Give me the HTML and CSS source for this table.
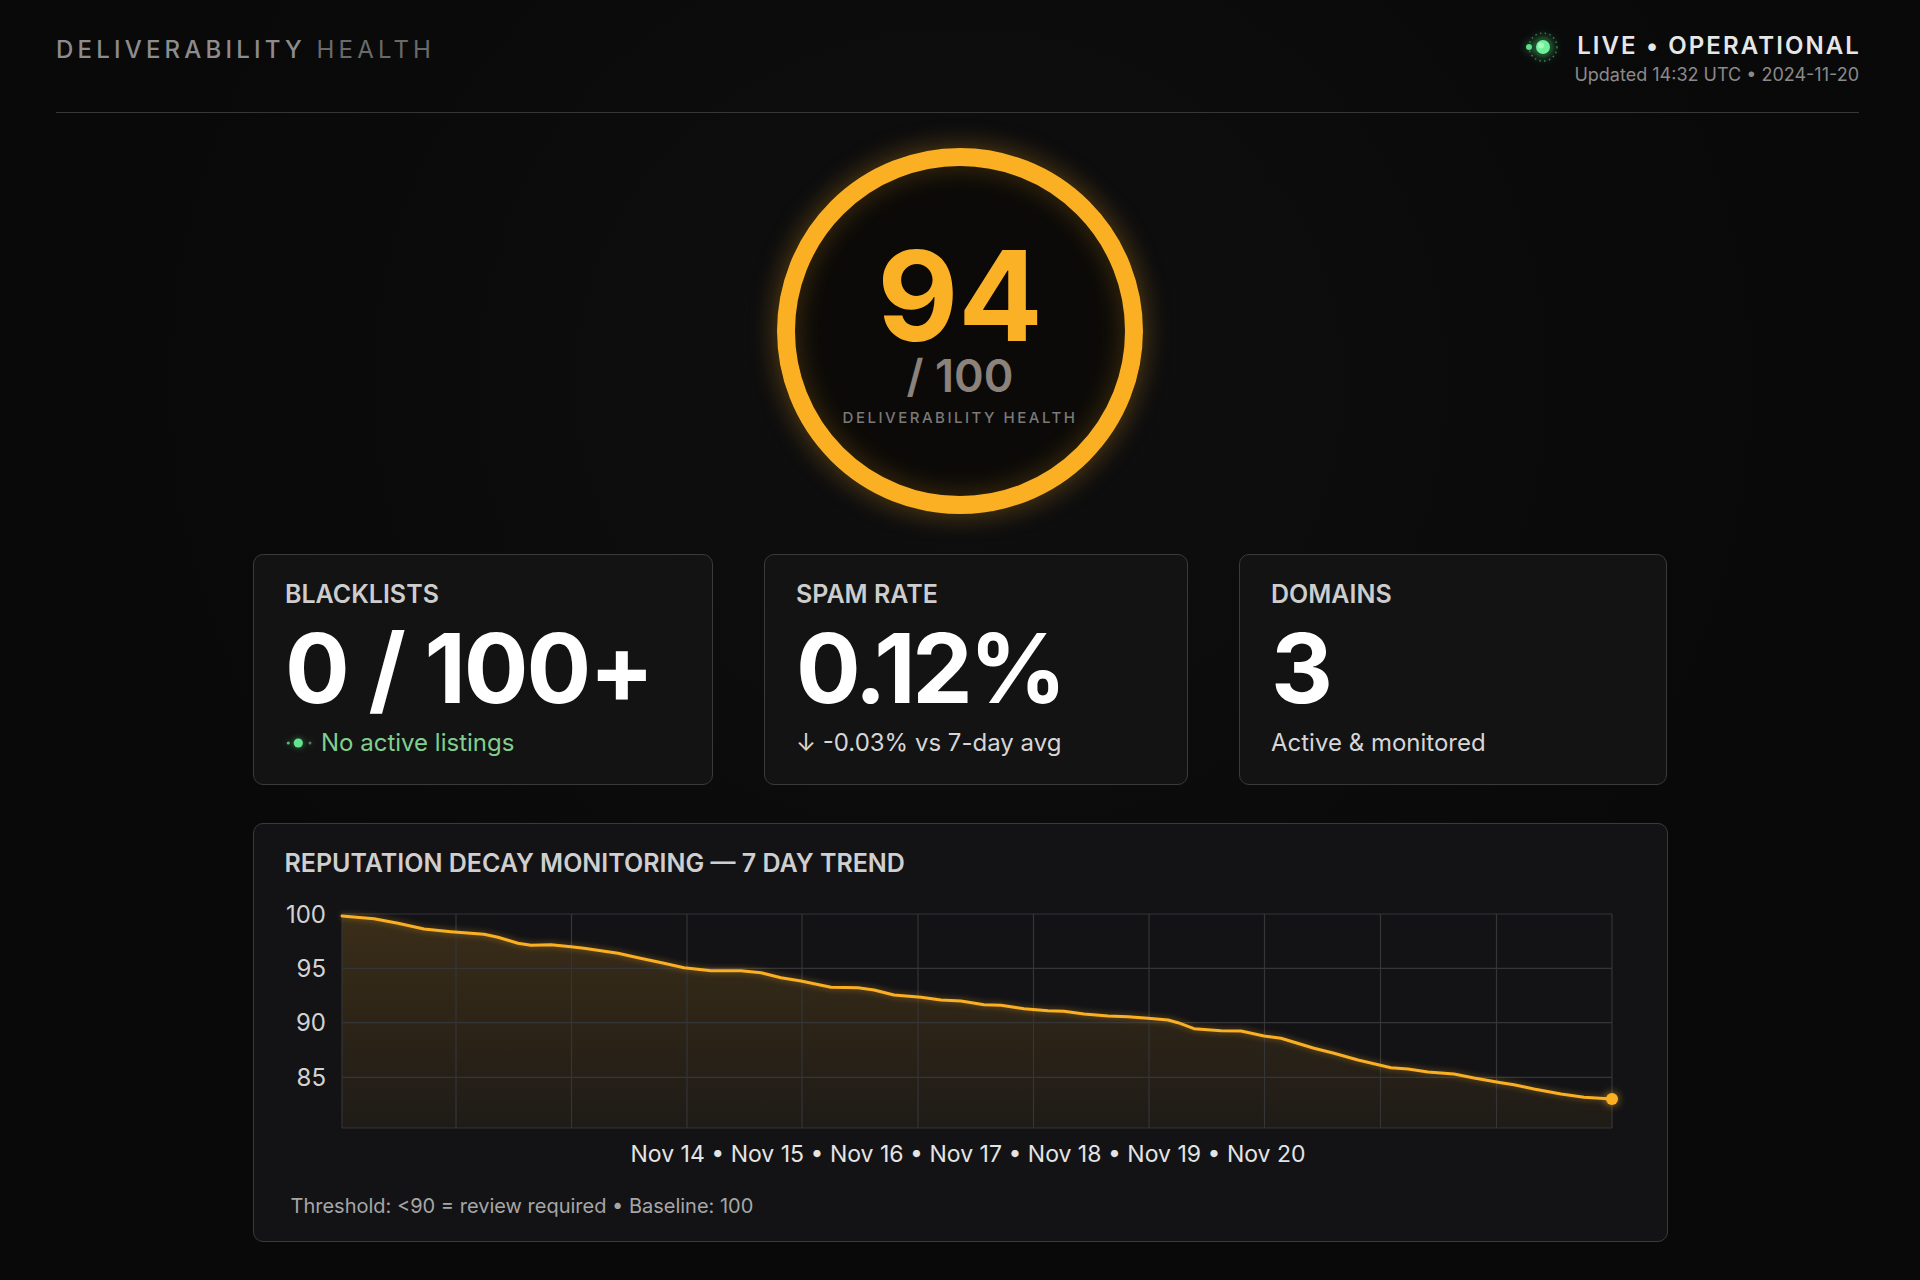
FILE: index.html
```html
<!DOCTYPE html>
<html lang="en">
<head>
<meta charset="utf-8">
<title>Deliverability Health</title>
<link rel="stylesheet" href="styles.css">
</head>
<body>
<div class="page">
  <header class="topbar">
    <h1 class="brand"><span class="brand-strong">DELIVERABILITY</span> <span class="brand-light">HEALTH</span></h1>
    <div class="status">
      <div class="status-row">
        <svg class="pulse" width="38" height="32" viewBox="0 0 38 32" aria-hidden="true">
          <circle cx="19" cy="16" r="14" fill="none" stroke="#3f9e5c" stroke-width="1.4" stroke-dasharray="1.6 3.2" opacity="0.8"/>
          <circle cx="19" cy="16" r="10" fill="#1b4d2a" opacity="0.6"/>
          <circle cx="5" cy="16" r="3" fill="#59e083"/>
          <circle cx="19" cy="16" r="7" fill="#6ff09a"/>
          <circle cx="17" cy="14.5" r="3" fill="#b9ffd0" opacity="0.7"/>
        </svg>
        <span class="status-text">LIVE • OPERATIONAL</span>
      </div>
      <div class="status-time">Updated 14:32 UTC • 2024-11-20</div>
    </div>
  </header>

  <main class="main">
    <div class="gauge">
      <div class="gauge-score">94</div>
      <div class="gauge-max">/ 100</div>
      <div class="gauge-label">DELIVERABILITY HEALTH</div>
    </div>

    <section class="stats">
      <div class="card">
        <div class="card-label">BLACKLISTS</div>
        <div class="card-value">0 / 100+</div>
        <div class="card-sub card-sub-ok">
          <svg class="ok-dots" width="30" height="14" viewBox="0 0 30 14" aria-hidden="true">
            <circle cx="3.3" cy="7" r="1.6" fill="#4fbf6e"/>
            <circle cx="13.3" cy="7" r="4.6" fill="#63e58c"/>
            <circle cx="25" cy="7" r="1.5" fill="#6b6f6c"/>
          </svg>
          <span>No active listings</span>
        </div>
      </div>
      <div class="card">
        <div class="card-label">SPAM RATE</div>
        <div class="card-value card-value-tight">0.12%</div>
        <div class="card-sub">↓ -0.03% vs 7-day avg</div>
      </div>
      <div class="card">
        <div class="card-label">DOMAINS</div>
        <div class="card-value">3</div>
        <div class="card-sub">Active &amp; monitored</div>
      </div>
    </section>

    <section class="trend">
      <h2 class="trend-title">REPUTATION DECAY MONITORING — 7 DAY TREND</h2>
      <svg class="trend-chart" width="1351" height="240" viewBox="0 0 1351 240">
        <defs>
          <linearGradient id="areaFill" x1="0" y1="0" x2="0" y2="1">
            <stop offset="0" stop-color="#fbb024" stop-opacity="0.17"/>
            <stop offset="1" stop-color="#fbb024" stop-opacity="0.05"/>
          </linearGradient>
        </defs>
        <polygon fill="url(#areaFill)" points="57,228 57,16 89,18.7 113,23.3 139,29 166,31.7 199,34.3 213,37.3 233,43.3 246,45.3 266,44.7 286,46.7 299,48.3 333,53.3 353,57.7 379,63.3 399,67.7 426,70.7 456,70.7 476,72.7 496,77.7 516,81 546,87.3 573,87.7 589,90 609,95 636,97.3 656,100 676,101 699,104.7 716,105.3 739,108.7 763,110.7 779,111.3 799,114 823,116 843,116.7 863,118.3 883,120 893,122.7 909,128.7 936,130.7 956,131 979,136 996,138.3 1029,148.3 1049,153.3 1073,160 1106,167.7 1123,169 1143,172 1169,174 1189,178 1216,182.7 1229,184.7 1249,189 1276,194 1299,197.3 1327,199 1327,228"/>
        <g class="grid">
          <line x1="57" y1="14" x2="1327" y2="14"/>
          <line x1="57" y1="68.3" x2="1327" y2="68.3"/>
          <line x1="57" y1="122.7" x2="1327" y2="122.7"/>
          <line x1="57" y1="177.3" x2="1327" y2="177.3"/>
          <line x1="57" y1="228" x2="1327" y2="228"/>
          <line x1="57" y1="14" x2="57" y2="228"/>
          <line x1="171" y1="14" x2="171" y2="228"/>
          <line x1="286.5" y1="14" x2="286.5" y2="228"/>
          <line x1="402" y1="14" x2="402" y2="228"/>
          <line x1="517" y1="14" x2="517" y2="228"/>
          <line x1="633" y1="14" x2="633" y2="228"/>
          <line x1="748.5" y1="14" x2="748.5" y2="228"/>
          <line x1="864" y1="14" x2="864" y2="228"/>
          <line x1="979.5" y1="14" x2="979.5" y2="228"/>
          <line x1="1095.5" y1="14" x2="1095.5" y2="228"/>
          <line x1="1211.5" y1="14" x2="1211.5" y2="228"/>
          <line x1="1327" y1="14" x2="1327" y2="228"/>
        </g>
        <g class="axis-labels">
          <text x="41" y="14">100</text>
          <text x="41" y="68.3">95</text>
          <text x="41" y="122.7">90</text>
          <text x="41" y="177.3">85</text>
        </g>
        <polyline class="trend-line" fill="none" points="57,16 89,18.7 113,23.3 139,29 166,31.7 199,34.3 213,37.3 233,43.3 246,45.3 266,44.7 286,46.7 299,48.3 333,53.3 353,57.7 379,63.3 399,67.7 426,70.7 456,70.7 476,72.7 496,77.7 516,81 546,87.3 573,87.7 589,90 609,95 636,97.3 656,100 676,101 699,104.7 716,105.3 739,108.7 763,110.7 779,111.3 799,114 823,116 843,116.7 863,118.3 883,120 893,122.7 909,128.7 936,130.7 956,131 979,136 996,138.3 1029,148.3 1049,153.3 1073,160 1106,167.7 1123,169 1143,172 1169,174 1189,178 1216,182.7 1229,184.7 1249,189 1276,194 1299,197.3 1327,199"/>
        <circle class="trend-end" cx="1327" cy="199" r="6"/>
      </svg>
      <div class="trend-dates">Nov 14 • Nov 15 • Nov 16 • Nov 17 • Nov 18 • Nov 19 • Nov 20</div>
      <div class="trend-note">Threshold: &lt;90 = review required • Baseline: 100</div>
    </section>
  </main>
</div>
</body>
</html>
```

FILE: styles.css
```css
* { box-sizing: border-box; }

body {
  margin: 0;
  background: #09090a;
  font-family: Inter, "Noto Sans", "Liberation Sans", sans-serif;
  color: #eeeeee;
  min-height: 1280px;
}

.page {
  min-height: 1280px;
  background: radial-gradient(ellipse at 50% 30%, #0f0f10 0%, #09090a 60%);
}

/* ---------- header ---------- */
.topbar {
  display: flex;
  justify-content: space-between;
  align-items: flex-start;
  margin: 0 61px 0 56px;
  padding: 31px 0 26px;
  border-bottom: 1px solid #363636;
}

.brand {
  margin: 4px 0 0;
  font-size: 24px;
  line-height: 30px;
  font-weight: 500;
  letter-spacing: 4.2px;
}

.brand-strong { color: #8c8c8c; }
.brand-light { color: #6a6a6a; font-weight: 400; }

.status {
  display: flex;
  flex-direction: column;
  align-items: flex-end;
}

.status-row {
  display: flex;
  align-items: center;
  gap: 15px;
  height: 29px;
}

.pulse {
  display: block;
  margin-top: 3px;
  filter: drop-shadow(0 0 4px rgba(90, 230, 130, 0.6));
}

.status-text {
  font-size: 24px;
  line-height: 29px;
  font-weight: 600;
  letter-spacing: 2.1px;
  margin-right: -2px;
  color: #e6e6e6;
}

.status-time {
  margin-top: 4px;
  font-size: 18px;
  line-height: 22px;
  color: #8a8a8a;
}

/* ---------- main ---------- */
.main {
  display: flex;
  flex-direction: column;
  align-items: center;
}

.gauge {
  width: 366px;
  height: 366px;
  margin-top: 35px;
  padding-top: 9px;
  border: 18px solid #fbb024;
  border-radius: 50%;
  display: flex;
  flex-direction: column;
  align-items: center;
  justify-content: center;
  box-shadow: 0 0 28px rgba(251, 168, 30, 0.35), inset 0 0 26px rgba(251, 168, 30, 0.22);
  background: radial-gradient(circle, #0b0a08 55%, #15100a 100%);
}

.gauge-score {
  font-size: 125px;
  line-height: 100px;
  font-weight: 700;
  color: #fbb125;
}

.gauge-max {
  margin-top: 10px;
  font-size: 45px;
  line-height: 40px;
  font-weight: 600;
  color: #8a827b;
}

.gauge-label {
  margin-top: 14px;
  font-size: 15px;
  line-height: 15px;
  font-weight: 500;
  letter-spacing: 2.5px;
  color: #7a7a7a;
}

/* ---------- stat cards ---------- */
.stats {
  display: grid;
  grid-template-columns: 460px 424px 428px;
  column-gap: 51px;
  margin-top: 40px;
}

.card {
  height: 231px;
  background: #131313;
  border: 1px solid #3a3a3a;
  border-radius: 10px;
  padding: 25px 31px 0;
  display: flex;
  flex-direction: column;
}

.card-label {
  font-size: 25px;
  line-height: 29px;
  font-weight: 600;
  color: #cdcdcd;
}

.card-value {
  margin-top: 11px;
  font-size: 96px;
  line-height: 96px;
  font-weight: 700;
  color: #ffffff;
  letter-spacing: -2px;
}

.card-value-tight { letter-spacing: -3.5px; }

.card-sub {
  margin-top: 14px;
  font-size: 24px;
  line-height: 26px;
  color: #d6d6d6;
  display: flex;
  align-items: center;
}

.card-sub-ok { color: #80cf8f; }

.ok-dots {
  display: block;
  margin-right: 6px;
  filter: drop-shadow(0 0 3px rgba(90, 230, 130, 0.5));
}

/* ---------- trend chart ---------- */
.trend {
  width: 1415px;
  margin-top: 38px;
  background: #131316;
  border: 1px solid #3a3a3a;
  border-radius: 10px;
  padding: 25px 31px 23px;
}

.trend-title {
  margin: 0;
  font-size: 25px;
  line-height: 29px;
  font-weight: 600;
  color: #cfcfcf;
}

.trend-chart {
  display: block;
  margin-top: 22px;
  overflow: visible;
}

.grid line {
  stroke: #353538;
  stroke-width: 1.2;
}

.axis-labels text {
  font-family: Inter, "Noto Sans", sans-serif;
  font-size: 24px;
  fill: #d2d2d2;
  text-anchor: end;
  dominant-baseline: central;
}

.trend-line {
  stroke: #fbb024;
  stroke-width: 3;
  stroke-linejoin: round;
  stroke-linecap: round;
  filter: drop-shadow(0 0 3px rgba(251, 176, 36, 0.45));
}

.trend-end {
  fill: #fbb024;
  filter: drop-shadow(0 0 4px rgba(251, 176, 36, 0.7));
}

.trend-dates {
  margin-top: 1px;
  padding-left: 16px;
  text-align: center;
  font-size: 23px;
  line-height: 26px;
  color: #e4e4e4;
}

.trend-note {
  margin-top: 28px;
  padding-left: 6px;
  font-size: 20px;
  line-height: 23px;
  color: #a6a6a6;
}
```
